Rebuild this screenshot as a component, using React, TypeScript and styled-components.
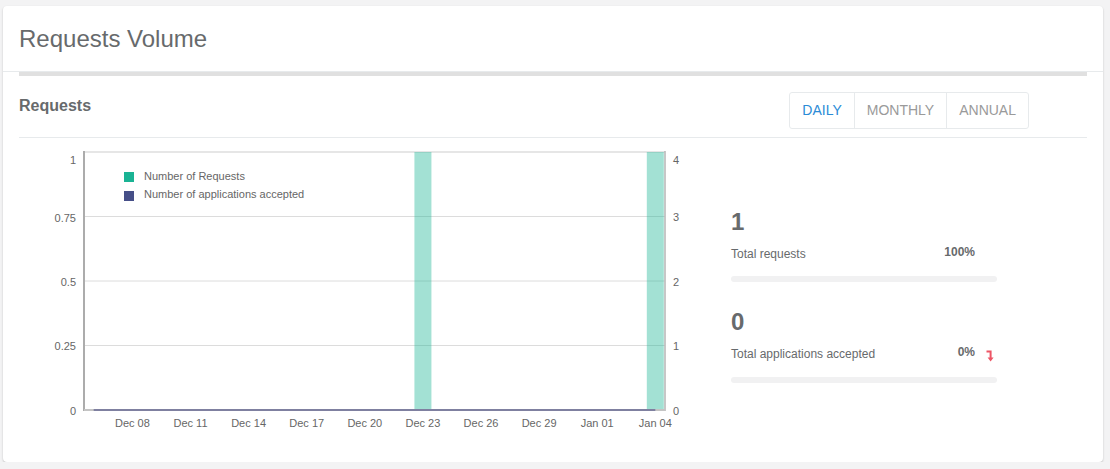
import React from "react";
import styled, { createGlobalStyle } from "styled-components";

const GlobalStyle = createGlobalStyle`
  html, body { margin: 0; padding: 0; }
  body {
    background: #f3f3f4;
    font-family: "Liberation Sans", Arial, sans-serif;
    color: #676a6c;
  }
`;

const Page = styled.div`
  padding: 6px 7px 0 3px;
`;

const Card = styled.div`
  width: 1100px;
  height: 456px;
  background: #fff;
  border-radius: 4px;
  box-shadow: 0 1px 2px rgba(0, 0, 0, 0.22);
  overflow: hidden;
  display: flex;
  flex-direction: column;
`;

const Header = styled.div`
  height: 65px;
  line-height: 65px;
  padding-left: 16px;
  font-size: 24px;
  color: #676a6c;
  border-bottom: 1px solid #e7eaec;
`;

const Body = styled.div`
  padding: 0 16px;
  display: flex;
  flex-direction: column;
`;

const GrayBar = styled.div`
  height: 4px;
  background: #e0e0e0;
`;

const TitleRow = styled.div`
  display: flex;
  justify-content: space-between;
  align-items: flex-start;
  padding: 16px 58px 8px 0;
  border-bottom: 1px solid #e7eaec;
`;

const SectionTitle = styled.h5`
  margin: 3.5px 0 0;
  font-size: 16px;
  line-height: 20px;
  font-weight: bold;
  color: #676a6c;
`;

const BtnGroup = styled.div`
  display: flex;
  border: 1px solid #e7eaec;
  border-radius: 3px;
  height: 35px;
`;

const Btn = styled.div<{ $active?: boolean }>`
  font-size: 14px;
  line-height: 35px;
  padding: 0 12px;
  color: ${(p) => (p.$active ? "#2b8bd6" : "#9a9a9a")};
  border-left: 1px solid #e7eaec;
  &:first-child { border-left: none; }
`;

const ChartRow = styled.div`
  display: flex;
  align-items: flex-start;
`;

const ChartSvg = styled.svg`
  display: block;
  flex: none;
`;

const Stats = styled.div`
  margin-left: 22px;
  width: 266px;
  padding-top: 71.5px;
  display: flex;
  flex-direction: column;
  gap: 28px;
`;

const StatBlock = styled.div`
  display: flex;
  flex-direction: column;
`;

const StatNumber = styled.div`
  font-size: 24px;
  line-height: 24px;
  font-weight: bold;
  color: #676a6c;
`;

const StatRow = styled.div`
  margin-top: 13px;
  display: flex;
  align-items: flex-start;
  font-size: 12px;
  line-height: 14px;
`;

const StatLabel = styled.span`
  flex: 1;
`;

const StatPercent = styled.span`
  font-weight: bold;
  margin-top: -2px;
`;

const IconSlot = styled.span`
  width: 22px;
  padding-left: 11px;
  box-sizing: border-box;
  display: flex;
  padding-top: 3px;
`;

const Progress = styled.div`
  margin-top: 15px;
  height: 6px;
  border-radius: 3px;
  background: #f1f1f2;
`;

const LevelDown = () => (
  <svg width="8" height="12" viewBox="0 0 8 12">
    <path d="M0.5 0.5 H5.6 V7.5 H7.6 L4.6 11.5 L1.6 7.5 H3.6 V2.5 H0.5 Z" fill="#ed5565" />
  </svg>
);

const labels = ["Dec 08", "Dec 11", "Dec 14", "Dec 17", "Dec 20", "Dec 23", "Dec 26", "Dec 29", "Jan 01", "Jan 04"];

const Chart = () => {
  const L = 65;
  const R = 646;
  const T = 14;
  const B = 272;
  const n = 30;
  const step = (R - L) / n;
  const cx = (i: number) => L + step * (i + 0.5);
  const grid = [T, 78.5, 143, 207.5, B];
  const leftLab = [
    { t: "1", y: 26 },
    { t: "0.75", y: 83.5 },
    { t: "0.5", y: 147.5 },
    { t: "0.25", y: 212 },
    { t: "0", y: 276.5 },
  ];
  const rightLab = [
    { t: "4", y: 26 },
    { t: "3", y: 83 },
    { t: "2", y: 147.5 },
    { t: "1", y: 212 },
    { t: "0", y: 276.5 },
  ];
  const bars = [17, 29];
  return (
    <ChartSvg width={690} height={318} viewBox="0 0 690 318">
      {grid.slice(1, 4).map((y) => (
        <line key={y} x1={L} x2={R} y1={y} y2={y} stroke="#dcdcdc" strokeWidth={1} />
      ))}
      <line x1={L} x2={R} y1={T} y2={T} stroke="#e6e6e6" strokeWidth={2} />
      {bars.map((i) => (
        <rect key={i} x={cx(i) - 8.5} y={T} width={17} height={B - T} fill="rgba(26,179,148,0.4)" />
      ))}
      <line x1={L} x2={L} y1={T - 1} y2={B + 1} stroke="#acacac" strokeWidth={2} />
      <line x1={R} x2={R} y1={T - 1} y2={B + 1} stroke="#b4b4b4" strokeWidth={1.5} />
      <line x1={L} x2={R} y1={B} y2={B} stroke="#c4c4c4" strokeWidth={2} />
      <line x1={cx(0)} x2={cx(29)} y1={B} y2={B} stroke="#7f80a0" strokeWidth={2} />
      <g fontFamily="Liberation Sans, Arial, sans-serif" fontSize={11} fill="#666">
        {leftLab.map((l) => (
          <text key={l.t} x={57} y={l.y} textAnchor="end">{l.t}</text>
        ))}
        {rightLab.map((l) => (
          <text key={l.t} x={654} y={l.y}>{l.t}</text>
        ))}
        {labels.map((t, k) => (
          <text key={t} x={cx(2 + k * 3)} y={289} textAnchor="middle">{t}</text>
        ))}
        <rect x={105} y={34} width={10} height={10} fill="#1ab394" />
        <rect x={105} y={53} width={10} height={10} fill="#464f88" />
        <text x={125} y={42}>Number of Requests</text>
        <text x={125} y={60}>Number of applications accepted</text>
      </g>
    </ChartSvg>
  );
};

export default function App() {
  return (
    <>
      <GlobalStyle />
      <Page>
        <Card>
          <Header>Requests Volume</Header>
          <Body>
            <GrayBar />
            <TitleRow>
              <SectionTitle>Requests</SectionTitle>
              <BtnGroup>
                <Btn $active>DAILY</Btn>
                <Btn>MONTHLY</Btn>
                <Btn>ANNUAL</Btn>
              </BtnGroup>
            </TitleRow>
            <ChartRow>
              <Chart />
              <Stats>
                <StatBlock>
                  <StatNumber>1</StatNumber>
                  <StatRow>
                    <StatLabel>Total requests</StatLabel>
                    <StatPercent>100%</StatPercent>
                    <IconSlot />
                  </StatRow>
                  <Progress />
                </StatBlock>
                <StatBlock>
                  <StatNumber>0</StatNumber>
                  <StatRow>
                    <StatLabel>Total applications accepted</StatLabel>
                    <StatPercent>0%</StatPercent>
                    <IconSlot>
                      <LevelDown />
                    </IconSlot>
                  </StatRow>
                  <Progress />
                </StatBlock>
              </Stats>
            </ChartRow>
          </Body>
        </Card>
      </Page>
    </>
  );
}
